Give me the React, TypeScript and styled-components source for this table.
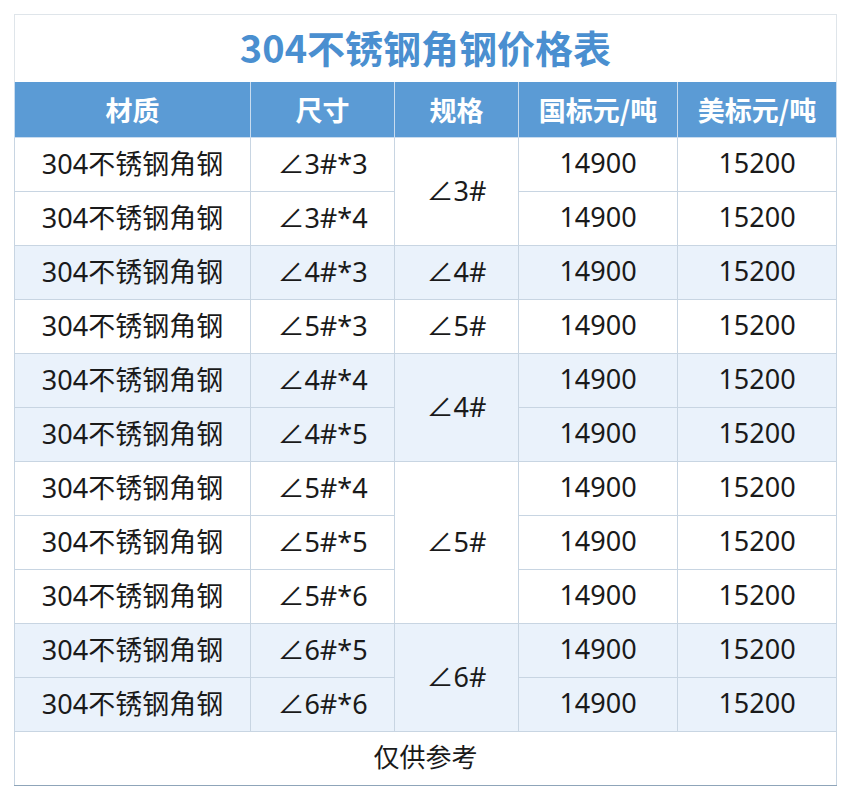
import React from 'react';
import styled, { createGlobalStyle } from 'styled-components';

const GlobalStyle = createGlobalStyle`
  html, body {
    margin: 0;
    padding: 0;
    background: #ffffff;
  }
`;

const Page = styled.div`
  padding: 14px;
  width: 850px;
  box-sizing: border-box;
  font-family: 'Noto Sans', 'Noto Sans CJK SC', sans-serif;
`;

const Table = styled.table`
  width: 822px;
  table-layout: fixed;
  border-collapse: collapse;
  border: 1px solid #9fb2c4;
  color: #1a1a1a;
`;

const TitleCell = styled.th`
  height: 64px;
  padding: 0 0 3px;
  border: 1px solid #dfe5ea;
  border-bottom: none;
  color: #4a8fd0;
  font-size: 38px;
  line-height: 1.3;
  font-weight: 700;
  font-family: 'Noto Sans CJK SC', sans-serif;
  text-align: center;
  vertical-align: middle;
`;

const HeadRow = styled.tr`
  height: 55px;
  background: #5b9bd5;
`;

const HeadCell = styled.th`
  padding: 0;
  border: 1px solid #c9dcef;
  border-top: none;
  color: #ffffff;
  font-size: 27px;
  font-weight: 700;
  font-family: 'Noto Sans CJK SC', sans-serif;
  text-align: center;
`;

const BodyRow = styled.tr<{ $shade: boolean }>`
  height: 54px;
  background: ${({ $shade }) => ($shade ? '#eaf2fb' : '#ffffff')};
`;

const Cell = styled.td`
  padding: 0 0 4px;
  border: 1px solid #c8d5e2;
  font-size: 27px;
  text-align: center;
  vertical-align: middle;
  white-space: nowrap;
`;

const FootRow = styled.tr`
  height: 54px;
  background: #ffffff;
`;

const FootCell = styled.td`
  padding: 0 0 4px;
  border: 1px solid #c8d5e2;
  border-bottom-color: #8fa5b9;
  font-size: 26px;
  text-align: center;
`;

type Row = { size: string; spec?: string; span?: number; shade: boolean };

const rows: Row[] = [
  { size: '∠3#*3', spec: '∠3#', span: 2, shade: false },
  { size: '∠3#*4', shade: false },
  { size: '∠4#*3', spec: '∠4#', span: 1, shade: true },
  { size: '∠5#*3', spec: '∠5#', span: 1, shade: false },
  { size: '∠4#*4', spec: '∠4#', span: 2, shade: true },
  { size: '∠4#*5', shade: true },
  { size: '∠5#*4', spec: '∠5#', span: 3, shade: false },
  { size: '∠5#*5', shade: false },
  { size: '∠5#*6', shade: false },
  { size: '∠6#*5', spec: '∠6#', span: 2, shade: true },
  { size: '∠6#*6', shade: true },
];

export default function App() {
  return (
    <Page>
      <GlobalStyle />
      <Table>
        <colgroup>
          <col style={{ width: 236 }} />
          <col style={{ width: 144 }} />
          <col style={{ width: 124 }} />
          <col style={{ width: 159 }} />
          <col style={{ width: 159 }} />
        </colgroup>
        <thead>
          <tr>
            <TitleCell colSpan={5}>304不锈钢角钢价格表</TitleCell>
          </tr>
          <HeadRow>
            <HeadCell>材质</HeadCell>
            <HeadCell>尺寸</HeadCell>
            <HeadCell>规格</HeadCell>
            <HeadCell>国标元/吨</HeadCell>
            <HeadCell>美标元/吨</HeadCell>
          </HeadRow>
        </thead>
        <tbody>
          {rows.map((r) => (
            <BodyRow key={r.size} $shade={r.shade}>
              <Cell>304不锈钢角钢</Cell>
              <Cell>{r.size}</Cell>
              {r.spec && <Cell rowSpan={r.span}>{r.spec}</Cell>}
              <Cell>14900</Cell>
              <Cell>15200</Cell>
            </BodyRow>
          ))}
          <FootRow>
            <FootCell colSpan={5}>仅供参考</FootCell>
          </FootRow>
        </tbody>
      </Table>
    </Page>
  );
}
